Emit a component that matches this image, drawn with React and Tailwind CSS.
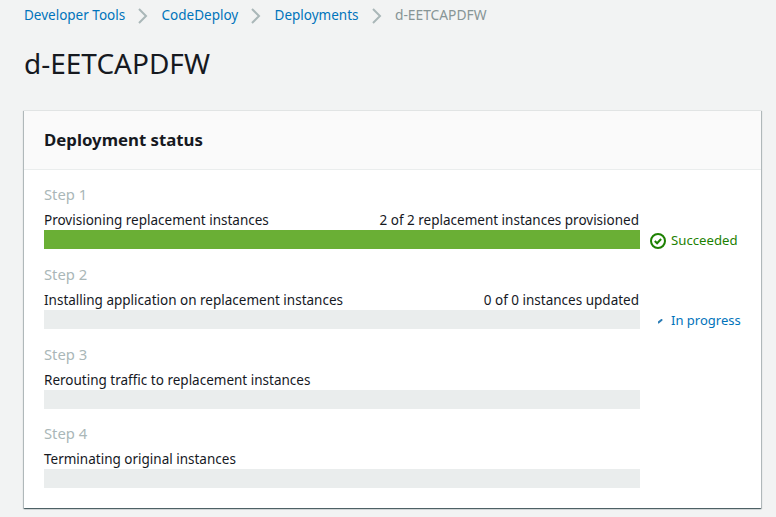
const steps = [
  { step: 'Step 1', title: 'Provisioning replacement instances', count: '2 of 2 replacement instances provisioned', fill: true },
  { step: 'Step 2', title: 'Installing application on replacement instances', count: '0 of 0 instances updated' },
  { step: 'Step 3', title: 'Rerouting traffic to replacement instances' },
  { step: 'Step 4', title: 'Terminating original instances' },
]

const crumbs = ['Developer Tools', 'CodeDeploy', 'Deployments']

function Chevron() {
  return (
    <svg width="10" height="16" viewBox="0 0 10 16" fill="none" stroke="#aab7b8" strokeWidth="2">
      <path d="M1 1l7 7-7 7" />
    </svg>
  )
}

function StatusCell({ step }) {
  if (step === 'Step 1') {
    return (
      <div className="flex items-center gap-[5px] pl-[10px] pt-[2px] text-[#1d8102] text-[13.2px]">
        <svg width="16" height="16" viewBox="0 0 16 16" fill="none" stroke="#1d8102">
          <circle cx="8" cy="8" r="7" strokeWidth="2" />
          <path d="M4.8 8l2.3 2.3 4-4.3" strokeWidth="2" />
        </svg>
        <span>Succeeded</span>
      </div>
    )
  }
  if (step === 'Step 2') {
    return (
      <div className="flex items-center gap-[8px] pl-[18px] pt-[2px] text-[#0073bb] text-[13px]">
        <svg width="5" height="5" viewBox="0 0 5 5" className="mt-[3px]">
          <path d="M0.5 3.5L3.5 1" stroke="#2b7cb5" strokeWidth="2" strokeLinecap="round" />
        </svg>
        <span>In progress</span>
      </div>
    )
  }
  return null
}

export default function App() {
  return (
    <div className="h-[517px] bg-[#f2f3f3] pl-6 pr-[15px] pt-[6px] font-['Noto_Sans',sans-serif] text-[13.5px] text-[#16191f] overflow-hidden">
      <nav className="flex items-center h-[19px]">
        {crumbs.map((c) => (
          <div key={c} className="flex items-center">
            <span className="text-[#0073bb]">{c}</span>
            <span className="mx-[13.2px] flex"><Chevron /></span>
          </div>
        ))}
        <span className="text-[#879596] text-[13.8px]">d-EETCAPDFW</span>
      </nav>

      <h1 className="mt-[19px] h-[38px] text-[28px] leading-[38px] font-normal">d-EETCAPDFW</h1>

      <section className="mt-[28px] bg-white shadow-[0_1px_1px_0_rgba(0,28,36,0.5),1px_1px_1px_0_rgba(0,28,36,0.2),-1px_1px_1px_0_rgba(0,28,36,0.2)] border-t border-[#e1e4e4]">
        <header className="h-[59px] flex items-center px-5 bg-[#fafafa] border-b border-[#eaeded]">
          <h2 className="text-[16.8px] font-bold">Deployment status</h2>
        </header>
        <div className="px-5 pt-[15px] pb-[20px] flex flex-col gap-[15.75px]">
          {steps.map((s) => (
            <div key={s.step} className="flex">
              <div className="w-[596px] shrink-0">
                <div className="text-[14.8px] leading-[18px] text-[#aab7b8]">{s.step}</div>
                <div className="mt-[7px] flex justify-between leading-[20px] pr-[1px]">
                  <span>{s.title}</span>
                  {s.count && <span>{s.count}</span>}
                </div>
                <div className={s.fill ? 'h-[19px] bg-[#6aaf35]' : 'h-[19px] bg-[#eaeded]'} />
              </div>
              <div className="self-end h-[19px] flex items-center leading-[19px]">
                <StatusCell step={s.step} />
              </div>
            </div>
          ))}
        </div>
      </section>
    </div>
  )
}
